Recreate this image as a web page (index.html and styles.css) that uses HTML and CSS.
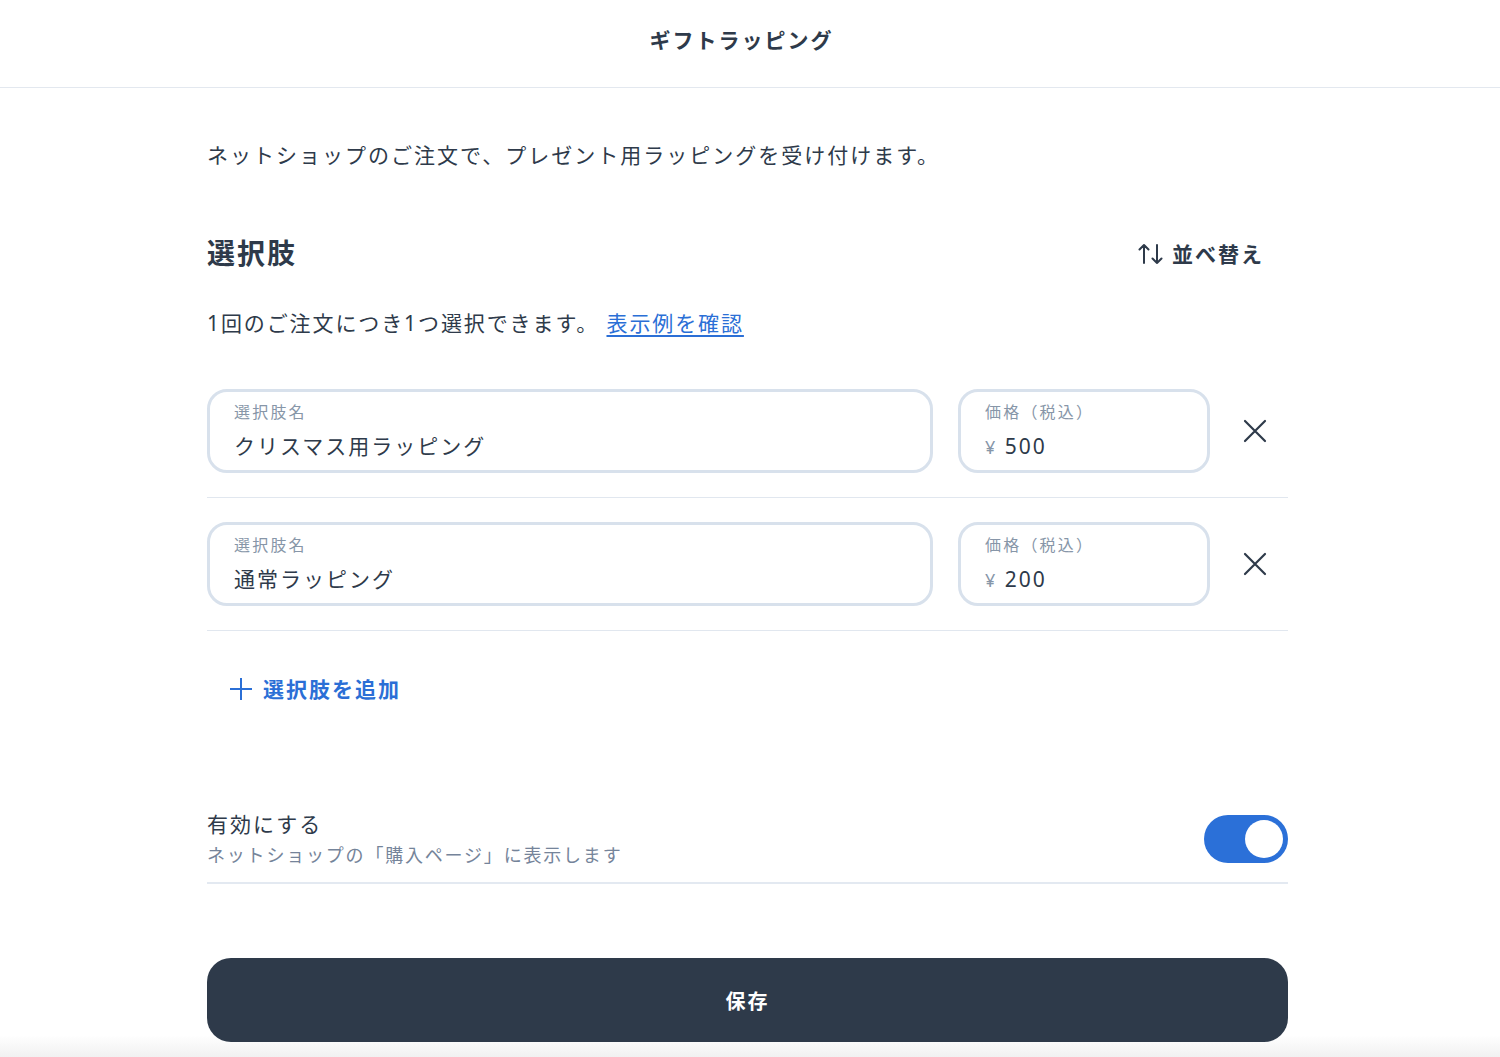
FILE: index.html
```html
<!DOCTYPE html>
<html lang="ja">
<head>
    <meta charset="UTF-8">
    <title>ギフトラッピング</title>
    <link rel="stylesheet" href="styles.css">
</head>
<body>
<header class="topbar">
    <h1 class="topbar-title">ギフトラッピング</h1>
</header>

<main class="page">
    <p class="lead">ネットショップのご注文で、プレゼント用ラッピングを受け付けます。</p>

    <div class="section-head">
        <h2 class="section-title">選択肢</h2>
        <button class="sort-btn">
            <svg width="26" height="24" viewBox="0 0 26 24" fill="none" stroke="#2e3a4a" stroke-width="2" stroke-linecap="round" stroke-linejoin="round">
                <path d="M6 21V3M1.5 7.5L6 3l4.5 4.5"/>
                <path d="M19 3v18M14.5 16.5L19 21l4.5-4.5"/>
            </svg>
            <span>並べ替え</span>
        </button>
    </div>

    <p class="note">1回のご注文につき1つ選択できます。 <a href="#" class="link">表示例を確認</a></p>

    <div class="options">
        <div class="option">
            <label class="field field-name">
                <span class="field-label">選択肢名</span>
                <span class="field-value">クリスマス用ラッピング</span>
            </label>
            <label class="field field-price">
                <span class="field-label">価格（税込）</span>
                <span class="field-value"><span class="yen">¥</span> 500</span>
            </label>
            <button class="remove-btn" aria-label="削除">
                <svg width="24" height="24" viewBox="0 0 24 24" fill="none" stroke="#2e3a4a" stroke-width="2.2" stroke-linecap="round">
                    <path d="M2 2l20 20M22 2L2 22"/>
                </svg>
            </button>
        </div>
        <div class="option">
            <label class="field field-name">
                <span class="field-label">選択肢名</span>
                <span class="field-value">通常ラッピング</span>
            </label>
            <label class="field field-price">
                <span class="field-label">価格（税込）</span>
                <span class="field-value"><span class="yen">¥</span> 200</span>
            </label>
            <button class="remove-btn" aria-label="削除">
                <svg width="24" height="24" viewBox="0 0 24 24" fill="none" stroke="#2e3a4a" stroke-width="2.2" stroke-linecap="round">
                    <path d="M2 2l20 20M22 2L2 22"/>
                </svg>
            </button>
        </div>
    </div>

    <button class="add-btn">
        <svg width="22" height="22" viewBox="0 0 22 22" fill="none" stroke="#2b6fd6" stroke-width="2">
            <path d="M11 0v22M0 11h22"/>
        </svg>
        <span>選択肢を追加</span>
    </button>

    <div class="enable-row">
        <div class="enable-text">
            <div class="enable-title">有効にする</div>
            <div class="enable-sub">ネットショップの「購入ページ」に表示します</div>
        </div>
        <div class="toggle on"><span class="knob"></span></div>
    </div>
</main>

<footer class="footer">
    <div class="footer-inner">
        <button class="save-btn">保存</button>
    </div>
</footer>
</body>
</html>
```

FILE: styles.css
```css
body {
    margin: 0;
    background: #ffffff;
    color: #2e3a4a;
    font-family: "Noto Sans", "Noto Sans CJK JP", sans-serif;
    letter-spacing: 2px;
}

button {
    font-family: inherit;
    letter-spacing: inherit;
    background: none;
    border: none;
    padding: 0;
    cursor: pointer;
    color: inherit;
}

.topbar {
    height: 87px;
    border-bottom: 1px solid #e3e8ef;
    display: flex;
    align-items: center;
    justify-content: center;
    padding-right: 17px;
}

.topbar-title {
    margin: 0;
    font-size: 21px;
    font-weight: 700;
    line-height: 30px;
    padding-bottom: 7px;
}

.page {
    width: 1081px;
    margin-left: 207px;
}

.lead {
    margin: 52px 0 0;
    font-size: 21px;
    line-height: 30px;
}

.section-head {
    display: flex;
    align-items: center;
    justify-content: space-between;
    margin-top: 62px;
}

.section-title {
    margin: 0;
    font-size: 28px;
    line-height: 42px;
    font-weight: 700;
    letter-spacing: 0.07em;
}

.sort-btn {
    display: flex;
    align-items: center;
    gap: 8px;
    font-size: 21px;
    font-weight: 700;
    line-height: 30px;
    padding: 2px 24px 0 0;
}

.note {
    margin: 34px 0 0;
    font-size: 21px;
    line-height: 30px;
    letter-spacing: 1.9px;
}

.link {
    color: #2b6fd6;
    text-decoration: underline;
    text-underline-offset: 4px;
}

.options {
    margin-top: 27px;
}

.option {
    display: flex;
    align-items: center;
    gap: 25px;
    padding: 24px 0;
    border-bottom: 1px solid #e1e7ef;
}

.field {
    display: flex;
    flex-direction: column;
    box-sizing: border-box;
    height: 84px;
    padding: 8px 24px 0;
    border: 3px solid #d8e1ec;
    border-radius: 20px;
}

.field-name {
    flex: 1;
}

.field-price {
    width: 252px;
}

.field-label {
    font-size: 16px;
    line-height: 24px;
    color: #8796a8;
    letter-spacing: 2.2px;
}

.field-value {
    margin-top: 7px;
    font-size: 21px;
    line-height: 30px;
}

.yen {
    color: #8796a8;
    font-size: 18px;
}

.remove-btn {
    width: 40px;
    height: 40px;
    margin-right: 13px;
    display: flex;
    align-items: center;
    justify-content: center;
}

.add-btn {
    display: flex;
    align-items: center;
    gap: 11px;
    margin-top: 43px;
    padding-left: 23px;
    font-size: 21px;
    line-height: 30px;
    font-weight: 700;
    color: #2b6fd6;
}

.enable-row {
    display: flex;
    align-items: center;
    justify-content: space-between;
    margin-top: 105px;
    padding-bottom: 13px;
    border-bottom: 2px solid #e3e9f1;
}

.enable-title {
    font-size: 21px;
    line-height: 30px;
}

.enable-sub {
    margin-top: 3px;
    font-size: 18px;
    line-height: 27px;
    color: #75849a;
    letter-spacing: 0.1em;
}

.toggle {
    position: relative;
    width: 84px;
    height: 48px;
    border-radius: 24px;
    background: #cfd8e3;
}

.toggle.on {
    background: #2b70d8;
}

.knob {
    position: absolute;
    top: 5px;
    right: 5px;
    width: 38px;
    height: 38px;
    border-radius: 50%;
    background: #ffffff;
}

.footer {
    padding: 74px 0 15px;
    background: linear-gradient(#ffffff 0, #ffffff calc(100% - 22px), #f1f1f1 100%);
}

.footer-inner {
    width: 1081px;
    margin-left: 207px;
}

.save-btn {
    display: block;
    width: 100%;
    height: 84px;
    border-radius: 24px;
    background: #2e3a4a;
    color: #ffffff;
    font-size: 20px;
    font-weight: 700;
}
```
